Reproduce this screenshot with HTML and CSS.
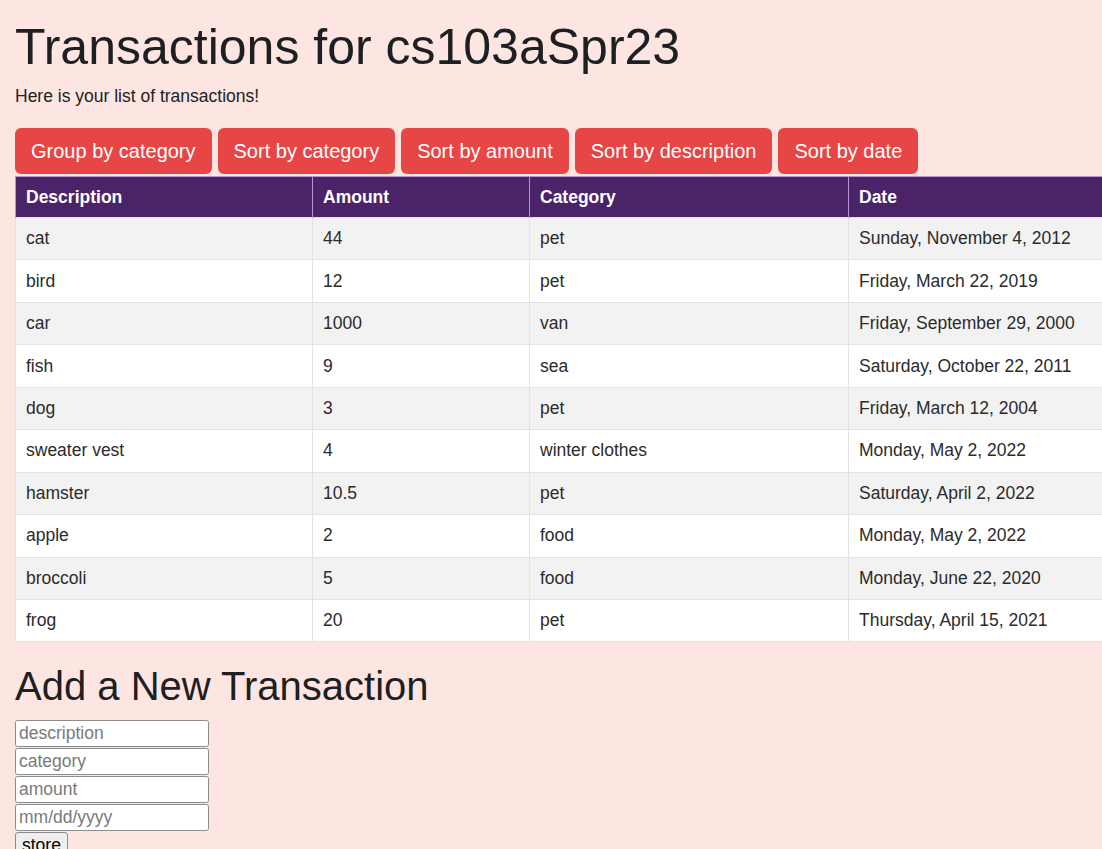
FILE: index.html
```html
<!DOCTYPE html>
<html lang="en">
<head>
<meta charset="utf-8">
<title>Transactions</title>
<link rel="stylesheet" href="styles.css">
</head>
<body>
<h1 class="title">Transactions for cs103aSpr23</h1>
<p class="intro">Here is your list of transactions!</p>
<div class="actions">
  <button class="btn">Group by category</button>
  <button class="btn">Sort by category</button>
  <button class="btn">Sort by amount</button>
  <button class="btn">Sort by description</button>
  <button class="btn">Sort by date</button>
</div>
<table class="tx">
  <colgroup>
    <col class="c-desc"><col class="c-amt"><col class="c-cat"><col class="c-date">
  </colgroup>
  <thead>
    <tr><th>Description</th><th>Amount</th><th>Category</th><th>Date</th></tr>
  </thead>
  <tbody>
    <tr><td>cat</td><td>44</td><td>pet</td><td>Sunday, November 4, 2012</td></tr>
    <tr><td>bird</td><td>12</td><td>pet</td><td>Friday, March 22, 2019</td></tr>
    <tr><td>car</td><td>1000</td><td>van</td><td>Friday, September 29, 2000</td></tr>
    <tr><td>fish</td><td>9</td><td>sea</td><td>Saturday, October 22, 2011</td></tr>
    <tr><td>dog</td><td>3</td><td>pet</td><td>Friday, March 12, 2004</td></tr>
    <tr><td>sweater vest</td><td>4</td><td>winter clothes</td><td>Monday, May 2, 2022</td></tr>
    <tr><td>hamster</td><td>10.5</td><td>pet</td><td>Saturday, April 2, 2022</td></tr>
    <tr><td>apple</td><td>2</td><td>food</td><td>Monday, May 2, 2022</td></tr>
    <tr><td>broccoli</td><td>5</td><td>food</td><td>Monday, June 22, 2020</td></tr>
    <tr><td>frog</td><td>20</td><td>pet</td><td>Thursday, April 15, 2021</td></tr>
  </tbody>
</table>
<h2 class="subtitle">Add a New Transaction</h2>
<form class="add-form">
  <input class="field" type="text" placeholder="description">
  <input class="field" type="text" placeholder="category">
  <input class="field" type="text" placeholder="amount">
  <input class="field" type="text" placeholder="mm/dd/yyyy">
  <button class="store" type="button">store</button>
</form>
</body>
</html>
```

FILE: styles.css
```css
html, body {
  overflow: hidden;
}
body {
  margin: 0;
  padding: 0 15px;
  background: #fde5e2;
  font-family: "Liberation Sans", Arial, sans-serif;
  color: #212529;
}
.title {
  margin: 17px 0 0;
  font-size: 50px;
  line-height: 60px;
  font-weight: 400;
  color: #1d1f22;
}
.intro {
  margin: 6px 0 0;
  font-size: 17.5px;
  line-height: 26.25px;
  color: #222;
}
.actions {
  display: flex;
  gap: 6px;
  margin-top: 18.75px;
  margin-bottom: 2px;
}
.btn {
  height: 46px;
  padding: 0 16px;
  border: none;
  border-radius: 6px;
  background: #e64646;
  color: #fff;
  font-family: inherit;
  font-size: 20px;
}
.tx {
  table-layout: fixed;
  width: 1115px;
  border-collapse: collapse;
  font-size: 17.5px;
  line-height: 25px;
  border-left: 1px solid #e2e2e2;
}
.c-desc { width: 297px; }
.c-amt { width: 217px; }
.c-cat { width: 319px; }
.c-date { width: 282px; }
.tx th {
  background: #4a2368;
  color: #fff;
  font-weight: 700;
  text-align: left;
  padding: 7.5px 10px;
  border-top: 1px solid #b596d0;
  border-left: 1px solid #b596d0;
  border-right: 1px solid #b596d0;
}
.tx td {
  padding: 8.3px 10px 8.15px 10px;
  color: #2b2b2b;
  border: 1px solid #e3e3e3;
  white-space: nowrap;
}
.tx tbody tr:nth-child(odd) td {
  background: #f2f2f2;
}
.tx tbody tr:nth-child(even) td {
  background: #ffffff;
}
.subtitle {
  margin: 20px 0 0;
  font-size: 40px;
  line-height: 48px;
  font-weight: 400;
  color: #1d1f22;
}
.add-form {
  margin-top: 10px;
}
.field {
  display: block;
  box-sizing: border-box;
  width: 194px;
  height: 27px;
  margin: 0 0 1px;
  padding: 1px 3px;
  border: 1px solid #8c8c8c;
  border-radius: 2.5px;
  background: #fff;
  font-family: inherit;
  font-size: 17.5px;
  color: #222;
}
.field::placeholder {
  color: #7a7a7a;
}
.store {
  display: block;
  height: 27px;
  padding: 1px 6px;
  border: 1px solid #8c8c8c;
  border-radius: 3px;
  background: #efefef;
  font-family: inherit;
  font-size: 17.5px;
  color: #000;
}
```
